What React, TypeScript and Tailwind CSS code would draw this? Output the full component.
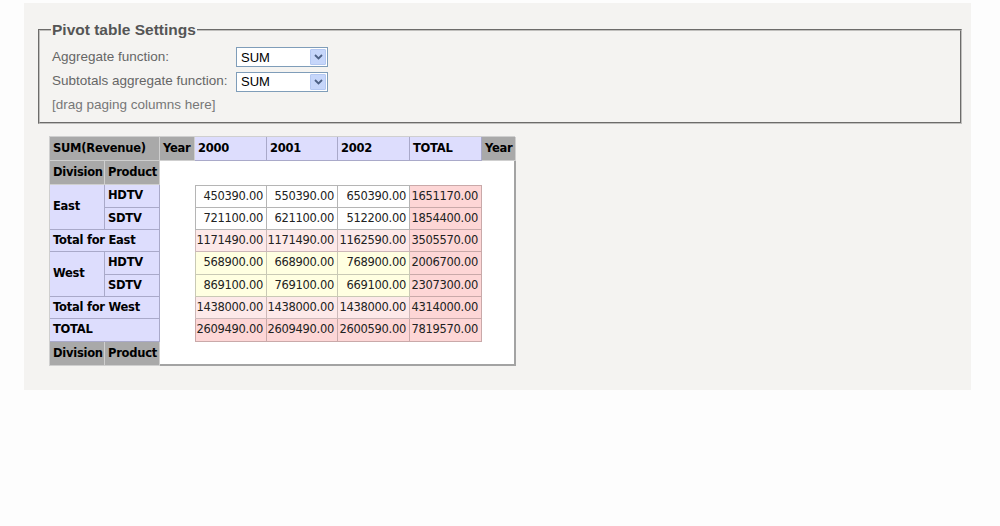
import React from "react";

const rowHeights = "grid-rows-[24px_24px_23px_22px_22px_23px_22px_22px_23px_24px]";
const colWidths = "grid-cols-[55px_55px_35px_72px_71px_72px_72px_34px]";

const gray = "bg-[#a9a9a9] border-r border-b border-[#cfcfcf] font-bold text-black px-[3px] flex items-center tracking-[-0.25px]";
const blue = "bg-[#ddddfd] border-r border-b border-[#a9a9c9] font-bold text-black px-[3px] flex items-center tracking-[-0.25px]";

function Chevron() {
  return (
    <svg width="9" height="6" viewBox="0 0 9 6">
      <path d="M1 1 L4.5 4.5 L8 1" fill="none" stroke="#4d6185" strokeWidth="1.8" />
    </svg>
  );
}

function Select() {
  return (
    <div className="w-[92px] h-[20px] bg-white border border-[#7f9db9] flex items-center justify-between pl-[4px] pr-[1px]">
      <span className="text-[13px] text-black leading-none">SUM</span>
      <div className="w-[16px] h-[16px] bg-[#c6d6fa] border border-[#b4c8f2] flex items-center justify-center rounded-[1px]">
        <Chevron />
      </div>
    </div>
  );
}

const years = ["2000", "2001", "2002"];

type DataRow = { vals: string[]; kind: "white" | "pink" | "yellow" | "grand" };

const data: DataRow[] = [
  { vals: ["450390.00", "550390.00", "650390.00", "1651170.00"], kind: "white" },
  { vals: ["721100.00", "621100.00", "512200.00", "1854400.00"], kind: "white" },
  { vals: ["1171490.00", "1171490.00", "1162590.00", "3505570.00"], kind: "pink" },
  { vals: ["568900.00", "668900.00", "768900.00", "2006700.00"], kind: "yellow" },
  { vals: ["869100.00", "769100.00", "669100.00", "2307300.00"], kind: "yellow" },
  { vals: ["1438000.00", "1438000.00", "1438000.00", "4314000.00"], kind: "pink" },
  { vals: ["2609490.00", "2609490.00", "2600590.00", "7819570.00"], kind: "grand" },
];

const rowStarts = ["row-start-3", "row-start-4", "row-start-5", "row-start-6", "row-start-7", "row-start-8", "row-start-9"];
const colStarts = ["col-start-4", "col-start-5", "col-start-6", "col-start-7"];

function cellClass(kind: DataRow["kind"], colIdx: number) {
  if (colIdx === 3 || kind === "grand") return "bg-[#fdd6d6] border-[#c9a9a9]";
  if (kind === "pink") return "bg-[#fde9e9] border-[#cdb9b9]";
  if (kind === "yellow") return "bg-[#ffffe1] border-[#c9c9b5]";
  return "bg-white border-[#b5b5b5]";
}

export default function App() {
  return (
    <div className="w-[1000px] h-[526px] bg-[#fdfdfd] pt-[3px] pl-[24px] font-['Liberation_Sans',Arial,sans-serif]">
      <div className="w-[947px] h-[387px] bg-[#f4f3f1] pt-[18px] flex flex-col">
        <fieldset className="ml-[14px] mr-[9px] h-[103px] border-2 [border-style:groove] border-[#c0bfbd] pl-[12px] pr-2 pt-0 pb-0">
          <legend className="px-[1px] text-[15.5px] font-bold text-[#555] leading-[18px] ml-[-1px]">Pivot table Settings</legend>
          <div className="flex flex-col text-[13.5px] text-[#666] mt-[6px]">
            <div className="flex items-center h-[24px]">
              <span className="w-[184px]">Aggregate function:</span>
              <Select />
            </div>
            <div className="flex items-center h-[25px]">
              <span className="w-[184px]">Subtotals aggregate function:</span>
              <Select />
            </div>
            <div className="h-[22px] flex items-center text-[#777]">[drag paging columns here]</div>
          </div>
        </fieldset>

        <div className="ml-[25px] mt-[12px]">
          <div
            className={`grid ${colWidths} ${rowHeights} w-[466px] text-[11.5px] font-['DejaVu_Sans',Tahoma,sans-serif] border-l border-t border-[#cfcfcf]`}
          >
            {/* header row */}
            <div className={`${gray} col-start-1 col-span-2 row-start-1`}>SUM(Revenue)</div>
            <div className={`${gray} col-start-3 row-start-1`}>Year</div>
            {years.map((y, i) => (
              <div key={y} className={`${blue} ${colStarts[i]} row-start-1`}>{y}</div>
            ))}
            <div className={`${blue} col-start-7 row-start-1`}>TOTAL</div>
            <div className={`${gray} col-start-8 row-start-1`}>Year</div>

            {/* white area */}
            <div className="col-start-3 col-span-6 row-start-2 row-span-9 bg-white border-r-2 border-b-2 border-[#a3a3a3]" />

            <div className={`${gray} col-start-1 row-start-2`}>Division</div>
            <div className={`${gray} col-start-2 row-start-2`}>Product</div>

            <div className={`${blue} col-start-1 row-start-3 row-span-2`}>East</div>
            <div className={`${blue} col-start-2 row-start-3`}>HDTV</div>
            <div className={`${blue} col-start-2 row-start-4`}>SDTV</div>
            <div className={`${blue} col-start-1 col-span-2 row-start-5`}>Total for East</div>
            <div className={`${blue} col-start-1 row-start-6 row-span-2`}>West</div>
            <div className={`${blue} col-start-2 row-start-6`}>HDTV</div>
            <div className={`${blue} col-start-2 row-start-7`}>SDTV</div>
            <div className={`${blue} col-start-1 col-span-2 row-start-8`}>Total for West</div>
            <div className={`${blue} col-start-1 col-span-2 row-start-9`}>TOTAL</div>
            <div className={`${gray} col-start-1 row-start-10`}>Division</div>
            <div className={`${gray} col-start-2 row-start-10`}>Product</div>

            {data.map((r, ri) =>
              r.vals.map((v, ci) => (
                <div
                  key={`${ri}-${ci}`}
                  className={`${rowStarts[ri]} ${colStarts[ci]} ${cellClass(r.kind, ci)} border-r border-b ${ci === 0 ? "border-l" : ""} ${ri === 0 ? "border-t" : ""} flex items-center justify-end pr-[3px] text-[#222] tracking-[-0.3px]`}
                >
                  {v}
                </div>
              ))
            )}
          </div>
        </div>
      </div>
    </div>
  );
}
